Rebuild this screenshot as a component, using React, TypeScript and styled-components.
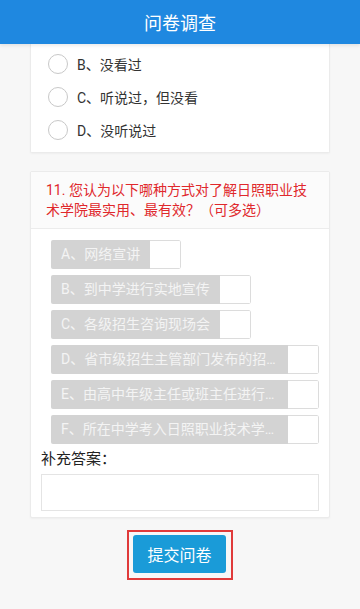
import React from 'react'
import styled, { createGlobalStyle } from 'styled-components'

const font = 'Roboto, "Noto Sans CJK SC", "Noto Sans", sans-serif'

const Global = createGlobalStyle`
  html, body {
    margin: 0;
    padding: 0;
    background: #f7f7f7;
    font-family: ${font};
  }
  * { box-sizing: border-box; }
`

const Page = styled.div`
  width: 360px;
  min-height: 609px;
  background: #f7f7f7;
  display: flex;
  flex-direction: column;
`

const Header = styled.header`
  height: 44px;
  background: #1f88e0;
  color: #fff;
  font-size: 18px;
  display: flex;
  align-items: center;
  justify-content: center;
  box-shadow: 0 2px 3px rgba(0, 0, 0, 0.08);
  position: relative;
  z-index: 1;
`

const Content = styled.main`
  display: flex;
  flex-direction: column;
  align-items: center;
  gap: 18px;
`

const Card = styled.section<{ $clipped?: boolean }>`
  width: 300px;
  background: #fff;
  border: 1px solid #ebebeb;
  border-top: ${p => (p.$clipped ? 'none' : '1px solid #ebebeb')};
  border-radius: ${p => (p.$clipped ? '0 0 2px 2px' : '2px')};
  box-shadow: 0 1px 2px rgba(0, 0, 0, 0.04);
`

const RadioList = styled.div`
  padding: 3px 0 6px 17px;
  display: flex;
  flex-direction: column;
`

const RadioRow = styled.label`
  height: 33px;
  display: flex;
  align-items: center;
  gap: 9px;
  font-size: 14px;
  color: #333;
`

const Circle = styled.span`
  width: 20px;
  height: 20px;
  border-radius: 50%;
  border: 1.5px solid #c8c8c8;
  flex-shrink: 0;
`

const Question = styled.div`
  background: #fbfbfb;
  border-bottom: 1px solid #ececec;
  padding: 8px 12px 8px 15px;
  color: #e0282c;
  font-size: 14px;
  line-height: 20px;
`

const Body = styled.div`
  padding: 11px 10px 6px 10px;
  display: flex;
  flex-direction: column;
`

const Options = styled.div`
  padding-left: 10px;
  display: flex;
  flex-direction: column;
  align-items: flex-start;
  gap: 6px;
`

const Option = styled.div`
  height: 29px;
  max-width: 268px;
  display: flex;
  border-radius: 2px;
  overflow: hidden;
`

const OptionLabel = styled.span`
  background: #d3d3d3;
  color: #f4f4f4;
  font-size: 14px;
  line-height: 29px;
  padding: 0 10px;
  white-space: nowrap;
  overflow: hidden;
  text-overflow: ellipsis;
  min-width: 0;
  flex: 1 1 auto;
`

const CheckBox = styled.span`
  width: 31px;
  flex-shrink: 0;
  background: #fff;
  border: 1px solid #dcdcdc;
  border-left: none;
  border-radius: 0 2px 2px 0;
`

const ExtraLabel = styled.div`
  font-size: 15px;
  color: #222;
  margin-top: 5px;
  line-height: 20px;
`

const TextArea = styled.div`
  margin-top: 5px;
  height: 37px;
  border: 1px solid #e4e4e4;
  background: #fff;
`

const Frame = styled.div`
  margin-top: 12px;
  border: 2px solid #e03a3a;
  padding: 3px 5px 5px 4px;
`

const SubmitButton = styled.button`
  width: 93px;
  height: 38px;
  background: #1a9bd8;
  color: #fff;
  border: none;
  border-radius: 3px;
  font-family: ${font};
  font-size: 16px;
  display: block;
`

const radios = ['B、没看过', 'C、听说过，但没看', 'D、没听说过']

const options = [
  'A、网络宣讲',
  'B、到中学进行实地宣传',
  'C、各级招生咨询现场会',
  'D、省市级招生主管部门发布的招生信息',
  'E、由高中年级主任或班主任进行宣传',
  'F、所在中学考入日照职业技术学院的学长介绍',
]

export default function App() {
  return (
    <Page>
      <Global />
      <Header>问卷调查</Header>
      <Content>
        <Card $clipped>
          <RadioList>
            {radios.map(r => (
              <RadioRow key={r}>
                <Circle />
                {r}
              </RadioRow>
            ))}
          </RadioList>
        </Card>
        <Card>
          <Question>11. 您认为以下哪种方式对了解日照职业技术学院最实用、最有效？（可多选）</Question>
          <Body>
            <Options>
              {options.map(o => (
                <Option key={o}>
                  <OptionLabel>{o}</OptionLabel>
                  <CheckBox />
                </Option>
              ))}
            </Options>
            <ExtraLabel>补充答案：</ExtraLabel>
            <TextArea />
          </Body>
        </Card>
      </Content>
      <Content>
        <Frame>
          <SubmitButton>提交问卷</SubmitButton>
        </Frame>
      </Content>
    </Page>
  )
}
